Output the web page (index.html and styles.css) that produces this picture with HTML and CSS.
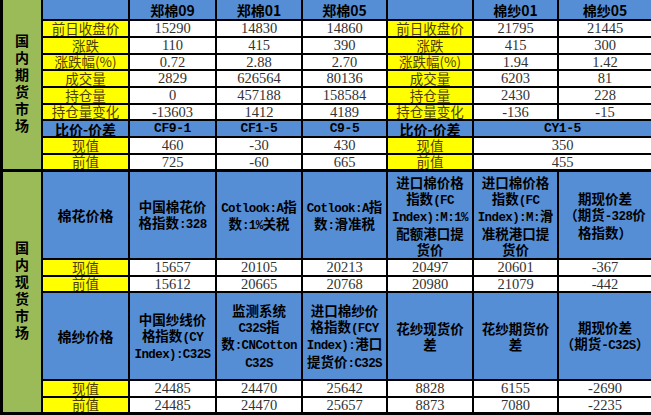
FILE: index.html
```html
<!DOCTYPE html>
<html lang="zh-CN">
<head>
<meta charset="utf-8">
<title>棉花市场</title>
<link rel="stylesheet" href="styles.css">
</head>
<body>
<div class="sheet">
  <div class="sec sec1">
    <div class="c g side1"><span class="vt">国内期货市场</span></div>
    <div class="c b"></div>
    <div class="c b hd">郑棉09</div>
    <div class="c b hd">郑棉01</div>
    <div class="c b hd">郑棉05</div>
    <div class="c b"></div>
    <div class="c b hd">棉纱01</div>
    <div class="c b hd">棉纱05</div>

    <div class="c y">前日收盘价</div>
    <div class="c w">15290</div><div class="c w">14830</div><div class="c w">14860</div>
    <div class="c y">前日收盘价</div>
    <div class="c w">21795</div><div class="c w">21445</div>

    <div class="c y">涨跌</div>
    <div class="c w">110</div><div class="c w">415</div><div class="c w">390</div>
    <div class="c y">涨跌</div>
    <div class="c w">415</div><div class="c w">300</div>

    <div class="c y">涨跌幅(%)</div>
    <div class="c w">0.72</div><div class="c w">2.88</div><div class="c w">2.70</div>
    <div class="c y">涨跌幅(%)</div>
    <div class="c w">1.94</div><div class="c w">1.42</div>

    <div class="c y">成交量</div>
    <div class="c w">2829</div><div class="c w">626564</div><div class="c w">80136</div>
    <div class="c y">成交量</div>
    <div class="c w">6203</div><div class="c w">81</div>

    <div class="c y">持仓量</div>
    <div class="c w">0</div><div class="c w">457188</div><div class="c w">158584</div>
    <div class="c y">持仓量</div>
    <div class="c w">2430</div><div class="c w">228</div>

    <div class="c y">持仓量变化</div>
    <div class="c w">-13603</div><div class="c w">1412</div><div class="c w">4189</div>
    <div class="c y">持仓量变化</div>
    <div class="c w">-136</div><div class="c w">-15</div>

    <div class="c b hd">比价-价差</div>
    <div class="c b hs">CF9-1</div><div class="c b hs">CF1-5</div><div class="c b hs">C9-5</div>
    <div class="c b hd">比价-价差</div>
    <div class="c b hs span2">CY1-5</div>

    <div class="c y">现值</div>
    <div class="c w">460</div><div class="c w">-30</div><div class="c w">430</div>
    <div class="c y">现值</div>
    <div class="c w span2">350</div>

    <div class="c y">前值</div>
    <div class="c w">725</div><div class="c w">-60</div><div class="c w">665</div>
    <div class="c y">前值</div>
    <div class="c w span2">455</div>
  </div>

  <div class="sec sec2">
    <div class="c g side2"><span class="vt">国内现货市场</span></div>
    <div class="c b hd">棉花价格</div>
    <div class="c b hm"><div class="t">中国棉花价<br>格指数<span class="m">:328</span></div></div>
    <div class="c b hm"><div class="t"><span class="m">Cotlook:A</span>指<br>数<span class="m">:1%</span>关税</div></div>
    <div class="c b hm"><div class="t"><span class="m">Cotlook:A</span>指<br>数<span class="m">:</span>滑准税</div></div>
    <div class="c b hm"><div class="t">进口棉价格<br>指数<span class="m">(FC</span><br><span class="m">Index):M:1%</span><br>配额港口提<br>货价</div></div>
    <div class="c b hm"><div class="t">进口棉价格<br>指数<span class="m">(FC</span><br><span class="m">Index):M:</span>滑<br>准税港口提<br>货价</div></div>
    <div class="c b hm"><div class="t">期现价差<br>（期货<span class="m">-328</span>价<br>格指数）</div></div>

    <div class="c y">现值</div>
    <div class="c w">15657</div><div class="c w">20105</div><div class="c w">20213</div>
    <div class="c w">20497</div><div class="c w">20601</div><div class="c w">-367</div>

    <div class="c y">前值</div>
    <div class="c w">15612</div><div class="c w">20665</div><div class="c w">20768</div>
    <div class="c w">20980</div><div class="c w">21079</div><div class="c w">-442</div>

    <div class="c b hd">棉纱价格</div>
    <div class="c b hm"><div class="t">中国纱线价<br>格指数<span class="m">(CY</span><br><span class="m">Index):C32S</span></div></div>
    <div class="c b hm"><div class="t">监测系统<br><span class="m">C32S</span>指<br>数<span class="m">:CNCotton</span><br><span class="m">C32S</span></div></div>
    <div class="c b hm"><div class="t">进口棉纱价<br>格指数<span class="m">(FCY</span><br><span class="m">Index):</span>港口<br>提货价<span class="m">:C32S</span></div></div>
    <div class="c b hm"><div class="t">花纱现货价<br>差</div></div>
    <div class="c b hm"><div class="t">花纱期货价<br>差</div></div>
    <div class="c b hm"><div class="t">期现价差<br>（期货<span class="m">-C32S</span>）</div></div>

    <div class="c y">现值</div>
    <div class="c w">24485</div><div class="c w">24470</div><div class="c w">25642</div>
    <div class="c w">8828</div><div class="c w">6155</div><div class="c w">-2690</div>

    <div class="c y">前值</div>
    <div class="c w">24485</div><div class="c w">24470</div><div class="c w">25657</div>
    <div class="c w">8873</div><div class="c w">7080</div><div class="c w">-2235</div>
  </div>
</div>
</body>
</html>
```

FILE: styles.css
```css
html, body {
  margin: 0;
  padding: 0;
  background: #ffffff;
}

.sheet {
  width: 651px;
  height: 415px;
  box-sizing: border-box;
  background: #000000;
  padding: 0 0 3px 3px;
  display: flex;
  flex-direction: column;
  gap: 3px;
  overflow: hidden;
}

.sec {
  display: grid;
  grid-template-columns: 38px 85px 85px 84px 83px 84px 83px 1fr;
  gap: 2px;
}

.sec1 {
  grid-template-rows: 19px 15px 15px 14px 15px 15px 14px 15px 15px 14px;
}

.sec2 {
  grid-template-rows: 86px 15px 14px 86px 15px 14px;
}

.c {
  display: flex;
  align-items: center;
  justify-content: center;
  text-align: center;
  white-space: nowrap;
  line-height: 1;
  min-width: 0;
  min-height: 0;
}

.g {
  background: #9bbb59;
  color: #000000;
}

.side1 {
  grid-row: 1 / span 10;
}

.side2 {
  grid-row: 1 / span 6;
}

.vt {
  writing-mode: vertical-rl;
  text-orientation: upright;
  font-family: "Noto Sans CJK SC", sans-serif;
  font-weight: 700;
  font-size: 14px;
  letter-spacing: 3px;
  line-height: 1;
}

.b {
  background: #558ed5;
  color: #000000;
}

.y {
  background: #ffff00;
  color: #4d3f00;
  font-family: "Noto Sans CJK SC", sans-serif;
  font-size: 13.5px;
}

.w {
  background: #ffffff;
  color: #333333;
  font-family: "Liberation Serif", "Noto Sans CJK SC", serif;
  font-size: 14.5px;
}

.hd {
  font-family: "Noto Sans CJK SC", sans-serif;
  font-weight: 700;
  font-size: 14px;
}

.hs {
  font-family: "Liberation Mono", monospace;
  font-weight: 700;
  font-size: 13px;
  letter-spacing: -0.4px;
}

.hm {
  font-family: "Noto Sans CJK SC", sans-serif;
  font-weight: 700;
  font-size: 13.5px;
}

.t {
  display: block;
  line-height: 16px;
  text-align: center;
}

.m {
  font-family: "Liberation Mono", monospace;
  font-weight: 700;
  font-size: 12.5px;
  letter-spacing: -0.6px;
  line-height: 1;
}

.span2 {
  grid-column: span 2;
}
```
